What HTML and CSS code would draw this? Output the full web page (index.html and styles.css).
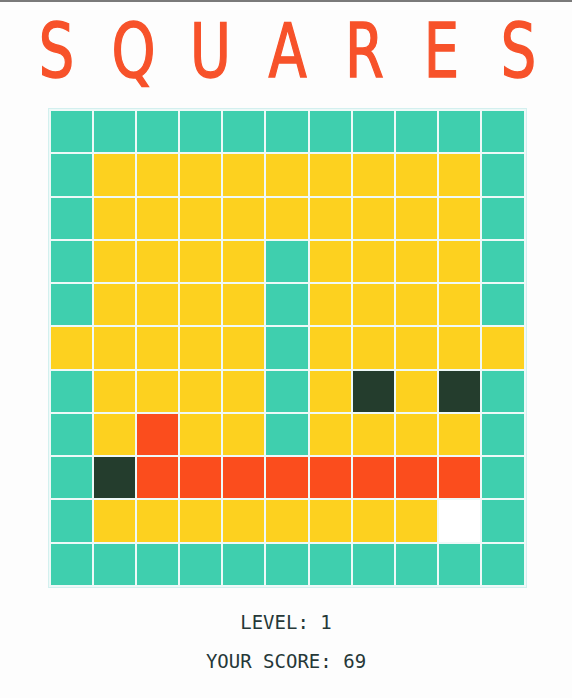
FILE: index.html
```html
<html>

<head>
  <meta http-equiv="Content-Type" content="text/html; charset=utf-8" />
  <title>Squares</title>
  <link rel="stylesheet" href="styles.css">
</head>

<body>
  <h1 class="title">
    <span>S</span><span>Q</span><span>U</span><span>A</span><span>R</span><span>E</span><span>S</span>
  </h1>
  <div class="board" id="board"></div>
  <p class="info">LEVEL: 1</p>
  <p class="info">YOUR SCORE: 69</p>
  <script>
    // t = teal, y = yellow, o = orange, d = dark, w = white
    var rows = [
      "ttttttttttt",
      "tyyyyyyyyyt",
      "tyyyyyyyyyt",
      "tyyyytyyyyt",
      "tyyyytyyyyt",
      "yyyyytyyyyy",
      "tyyyytydydt",
      "tyoyytyyyyt",
      "tdoooooooot",
      "tyyyyyyyywt",
      "ttttttttttt"
    ];
    var board = document.getElementById('board');
    rows.forEach(function (row) {
      row.split('').forEach(function (c) {
        var cell = document.createElement('div');
        cell.className = 'cell cell-' + c;
        board.appendChild(cell);
      });
    });
  </script>
</body>

</html>
```

FILE: styles.css
```css
body,
html {
  margin: 0;
  padding: 0;
}

body {
  background: #fdfdfd;
  border-top: 2px solid #7a7a7a;
  font-family: "DejaVu Sans Mono", "Liberation Mono", monospace;
}

.title {
  display: grid;
  grid-template-columns: repeat(7, 77px);
  justify-content: center;
  margin: 11px 0 0 2px;
  font-family: "DejaVu Sans Condensed", "Liberation Sans", sans-serif;
  font-size: 74px;
  font-weight: normal;
  line-height: 76px;
  color: #f7522a;
  -webkit-text-stroke: 1.4px #f7522a;
}

.title span {
  text-align: center;
  transform: scaleX(0.84);
}

.board {
  display: grid;
  grid-template-columns: repeat(11, 1fr);
  grid-template-rows: repeat(11, 1fr);
  gap: 2px;
  width: 473px;
  height: 474px;
  padding: 2px;
  margin: 20px auto 0;
  background: #eef9f8;
  box-shadow: 0 0 0 1px #d3f0ef;
  transform: translateX(1px);
}

.cell-t {
  background: #3fcfae;
}

.cell-y {
  background: #fdd11f;
}

.cell-o {
  background: #fb4d1d;
}

.cell-d {
  background: #243d2d;
}

.cell-w {
  background: #ffffff;
}

.info {
  margin: 0;
  font-size: 19px;
  line-height: 39px;
  text-align: center;
  color: #263838;
}

.board + .info {
  margin-top: 16px;
}
```
